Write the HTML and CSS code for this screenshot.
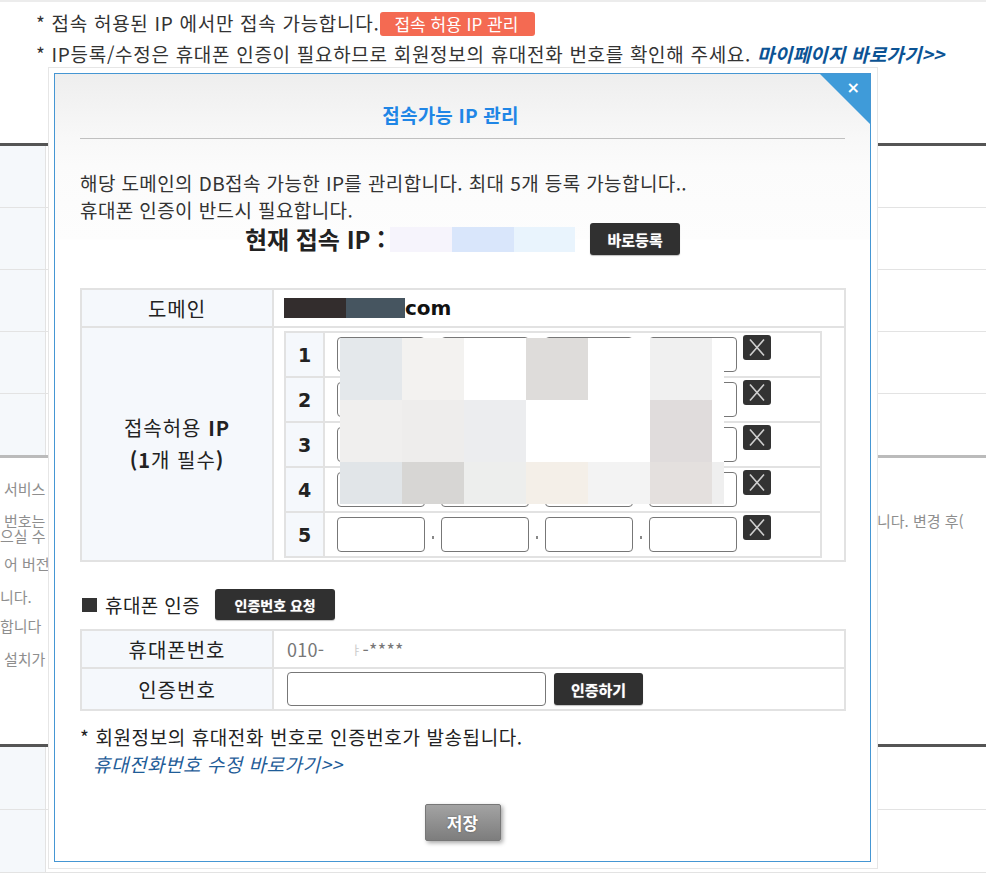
FILE: index.html
```html
<!DOCTYPE html>
<html lang="ko">
<head>
<meta charset="utf-8">
<title>접속가능 IP 관리</title>
<link rel="stylesheet" href="styles.css">
</head>
<body>
<div class="page">
  <div class="notices">
    <p class="notice">* 접속 허용된 IP 에서만 접속 가능합니다. <span class="btn-red">접속 허용 IP 관리</span></p>
    <p class="notice">* IP등록/수정은 휴대폰 인증이 필요하므로 회원정보의 휴대전화 번호를 확인해 주세요. <a class="mypage">마이페이지 바로가기&gt;&gt;</a></p>
  </div>
  <div class="bg-table bg-top">
    <div class="bg-row"><div class="bg-th"></div><div class="bg-td"></div></div>
    <div class="bg-row"><div class="bg-th"></div><div class="bg-td"></div></div>
    <div class="bg-row"><div class="bg-th"></div><div class="bg-td"></div></div>
    <div class="bg-row"><div class="bg-th"></div><div class="bg-td"></div></div>
    <div class="bg-row"><div class="bg-th"></div><div class="bg-td"></div></div>
  </div>
  <div class="bg-text">
    <div class="bgline l1"><span class="bg-left">서비스 이용 안내</span></div>
    <div class="bgline l2"><span class="bg-left">번호는 회원정보에 등록된 번호로 변경됩</span><span class="bg-right">니다. 변경 후(</span></div>
    <div class="bgline l3"><span class="bg-left">으실 수 있습니다</span></div>
    <div class="bgline l4"><span class="bg-left">어 버전</span></div>
    <div class="bgline l5"><span class="bg-left">니다.</span></div>
    <div class="bgline l6"><span class="bg-left">합니다</span></div>
    <div class="bgline l7"><span class="bg-left">설치가</span></div>
  </div>
  <div class="bg-table bg-bottom">
    <div class="bg-row"><div class="bg-th"></div><div class="bg-td"></div></div>
    <div class="bg-row"><div class="bg-th"></div><div class="bg-td"></div></div>
  </div>
</div>

<div class="modal-frame">
  <div class="modal">
    <a class="close">×</a>
    <h2 class="title">접속가능 IP 관리</h2>
    <hr class="rule">
    <p class="desc">해당 도메인의 DB접속 가능한 IP를 관리합니다. 최대 5개 등록 가능합니다..<br>휴대폰 인증이 반드시 필요합니다.</p>
    <div class="current-ip">
      <span class="current-label">현재 접속 IP :</span>
      <span class="ip-mask"><span class="m m1"></span><span class="m m2"></span><span class="m m3"></span></span>
      <button type="button" class="btn-dark btn-reg">바로등록</button>
    </div>

    <div class="info-table ip-table">
      <div class="th">도메인</div>
      <div class="td domain"><span class="dm dm1"></span><span class="dm dm2"></span><span class="com">com</span></div>
      <div class="th row2 allow"><span>접속허용 <b>IP</b><br><b>(1</b>개 필수<b>)</b></span></div>
      <div class="td row2 ipcell">
        <div class="iprows">
          <div class="iprow"><div class="num">1</div><div class="ipfields"><input class="oct" type="text"><span class="dot"></span><input class="oct" type="text"><span class="dot"></span><input class="oct" type="text"><span class="dot"></span><input class="oct" type="text"><button type="button" class="xbtn"><svg width="28" height="25" viewBox="0 0 28 25"><path d="M7 4.5 L21 20.5 M21 4.5 L7 20.5" stroke="#cfcfcf" stroke-width="1.6" fill="none"/></svg></button></div></div>
          <div class="iprow"><div class="num">2</div><div class="ipfields"><input class="oct" type="text"><span class="dot"></span><input class="oct" type="text"><span class="dot"></span><input class="oct" type="text"><span class="dot"></span><input class="oct" type="text"><button type="button" class="xbtn"><svg width="28" height="25" viewBox="0 0 28 25"><path d="M7 4.5 L21 20.5 M21 4.5 L7 20.5" stroke="#cfcfcf" stroke-width="1.6" fill="none"/></svg></button></div></div>
          <div class="iprow"><div class="num">3</div><div class="ipfields"><input class="oct" type="text"><span class="dot"></span><input class="oct" type="text"><span class="dot"></span><input class="oct" type="text"><span class="dot"></span><input class="oct" type="text"><button type="button" class="xbtn"><svg width="28" height="25" viewBox="0 0 28 25"><path d="M7 4.5 L21 20.5 M21 4.5 L7 20.5" stroke="#cfcfcf" stroke-width="1.6" fill="none"/></svg></button></div></div>
          <div class="iprow"><div class="num">4</div><div class="ipfields"><input class="oct" type="text"><span class="dot"></span><input class="oct" type="text"><span class="dot"></span><input class="oct" type="text"><span class="dot"></span><input class="oct" type="text"><button type="button" class="xbtn"><svg width="28" height="25" viewBox="0 0 28 25"><path d="M7 4.5 L21 20.5 M21 4.5 L7 20.5" stroke="#cfcfcf" stroke-width="1.6" fill="none"/></svg></button></div></div>
          <div class="iprow"><div class="num">5</div><div class="ipfields"><input class="oct" type="text"><span class="dot"></span><input class="oct" type="text"><span class="dot"></span><input class="oct" type="text"><span class="dot"></span><input class="oct" type="text"><button type="button" class="xbtn"><svg width="28" height="25" viewBox="0 0 28 25"><path d="M7 4.5 L21 20.5 M21 4.5 L7 20.5" stroke="#cfcfcf" stroke-width="1.6" fill="none"/></svg></button></div></div>
          <div class="blur">
            <i class="c-a"></i><i class="c-b"></i><i class="c-w"></i><i class="c-c"></i><i class="c-w"></i><i class="c-d"></i><i class="c-w"></i>
            <i class="c-e"></i><i class="c-f"></i><i class="c-g"></i><i class="c-w"></i><i class="c-w"></i><i class="c-h"></i><i class="c-w"></i>
            <i class="c-i"></i><i class="c-j"></i><i class="c-k"></i><i class="c-l"></i><i class="c-m"></i><i class="c-n"></i><i class="c-o"></i>
          </div>
        </div>
      </div>
    </div>

    <div class="auth-head">
      <span class="square"></span><span class="auth-title">휴대폰 인증</span>
      <button type="button" class="btn-dark btn-req">인증번호 요청</button>
    </div>

    <div class="info-table phone-table">
      <div class="th">휴대폰번호</div>
      <div class="td phone"><span>010-</span><span class="pmask">ㅑ</span><span>-****</span></div>
      <div class="th row2">인증번호</div>
      <div class="td row2 code"><input class="code-input" type="text"><button type="button" class="btn-dark btn-auth">인증하기</button></div>
    </div>

    <p class="note">* 회원정보의 휴대전화 번호로 인증번호가 발송됩니다.</p>
    <a class="edit-link">휴대전화번호 수정 바로가기&gt;&gt;</a>

    <div class="save-wrap"><button type="button" class="btn-save">저장</button></div>
  </div>
</div>
</body>
</html>
```
FILE: styles.css
```css
* { box-sizing: border-box; }
html, body { margin: 0; padding: 0; }
body {
  font-family: "Noto Sans CJK KR", "Noto Sans", sans-serif;
  color: #333;
  background: #fff;
  width: 986px;
  height: 881px;
  overflow: hidden;
  position: relative;
}

/* ---------- background page ---------- */
.page { border-top: 2px solid #ececec; padding-top: 5px; }
.notices { padding-left: 36px; }
.notice {
  margin: 0;
  font-size: 19px;
  letter-spacing: 0.7px;
  line-height: 31px;
  height: 31px;
  white-space: nowrap;
  color: #333;
}
.btn-red {
  display: inline-block;
  height: 24px;
  line-height: 24px;
  padding: 0 17px 0 14px;
  margin-left: -5px;
  background: #f46a52;
  color: #fff;
  font-size: 17px;
  letter-spacing: 0;
  border-radius: 3px;
  vertical-align: middle;
  position: relative;
  top: -2px;
}
.mypage { color: #0b5394; font-weight: bold; font-style: italic; letter-spacing: 0.2px; }

.bg-table { border-top: 3px solid #555; }
.bg-top { margin-top: 74px; border-bottom: 3px solid #bbb; }
.bg-row { display: flex; height: 62px; border-bottom: 1px solid #e3e3e3; }
.bg-top .bg-row:last-child { border-bottom: 0; height: 61px; }
.bg-bottom .bg-row { height: 63px; }
.bg-th { width: 46px; background: #f5f8fb; border-right: 1px solid #e3e3e3; }
.bg-td { flex: 1; }

.bg-text { height: 286px; padding-top: 23px; }
.bgline {
  display: flex;
  height: 16px;
  line-height: 16px;
  font-size: 15px;
  color: #8e8e8e;
  white-space: nowrap;
  overflow: hidden;
  padding-left: 4px;
}
.bg-left { width: 873px; flex-shrink: 0; overflow: hidden; }
.bg-right { flex-shrink: 0; }
.l2 { margin-top: 16px; }
.l3 { margin-top: -1px; padding-left: 0; }
.l4 { margin-top: 12px; }
.l5 { margin-top: 17px; padding-left: 0; }
.l6 { margin-top: 13px; padding-left: 0; }
.l7 { margin-top: 17px; }

/* ---------- modal ---------- */
.modal-frame {
  position: absolute;
  left: 48px;
  top: 67px;
  width: 830px;
  padding: 5px 6px 6px 5px;
  background: #fff;
  border: 1px solid #e6e6e6;
}
.modal {
  position: relative;
  border: 1px solid #4596d3;
  background: linear-gradient(to bottom, #eeeeee 0px, #f8f8f8 64px, #fbfbfb 92px, #fdfdfd 165px, #fff 166px);
  padding: 29px 25px 20px 25px;
}
.close {
  position: absolute;
  top: 0;
  right: 0;
  width: 50px;
  height: 50px;
  background: #3f9bd9;
  clip-path: polygon(0 0, 100% 0, 100% 100%);
  color: #fff;
  font-family: "DejaVu Sans", sans-serif;
  font-weight: bold;
  font-size: 16px;
  line-height: 20px;
  text-align: right;
  padding: 4px 10px 0 0;
}
.title {
  margin: 0;
  text-align: center;
  padding-right: 24px;
  font-size: 19px;
  letter-spacing: 0.2px;
  line-height: 24px;
  font-weight: bold;
  color: #1f86e6;
}
.rule { margin: 11px 0 0; border: 0; border-top: 1px solid #c0c0c0; height: 0; }
.desc { margin: 30px 0 0; font-size: 19px; letter-spacing: 0.4px; line-height: 27px; color: #333; }

.current-ip { display: flex; justify-content: center; align-items: center; height: 32px; }
.current-label { font-size: 24px; font-weight: bold; color: #222; margin-right: 5px; line-height: 32px; }
.ip-mask { display: flex; height: 25px; margin-right: 15px; }
.m { width: 62px; height: 25px; }
.m1 { background: #f6f4fc; }
.m2 { background: #d9e6fb; }
.m3 { background: #e9f4fd; width: 61px; }

.btn-dark {
  border: 0;
  margin: 0;
  padding: 0;
  background: #303030;
  color: #fff;
  font-family: "Noto Sans CJK KR", sans-serif;
  font-weight: bold;
  font-size: 15px;
  border-radius: 3px;
  text-shadow: 0 0 1px rgba(255,255,255,0.6);
  box-shadow: 0 1px 1px rgba(0,0,0,0.25);
}
.btn-reg { width: 90px; height: 32px; }

/* info tables */
.info-table {
  width: 766px;
  border: 2px solid #e2e2e2;
  display: grid;
  grid-template-columns: 192px 1fr;
}
.ip-table { margin-top: 33px; }
.info-table .th {
  background: #f5f8fc;
  border-right: 2px solid #e2e2e2;
  display: flex;
  align-items: center;
  justify-content: center;
  text-align: center;
  font-size: 20px;
  letter-spacing: 1px;
  color: #222;
}
.info-table .td { display: flex; align-items: center; }
.info-table .row2 { border-top: 2px solid #e2e2e2; }
.ip-table .th:first-child, .ip-table .domain { height: 36px; }
.allow { line-height: 32px; }
.allow b { font-weight: bold; }

.domain { padding-left: 10px; }
.dm { height: 20px; display: inline-block; }
.dm1 { width: 62px; background: #332d2d; }
.dm2 { width: 59px; background: #465560; }
.com { font-family: "DejaVu Sans", sans-serif; font-weight: bold; font-size: 20px; color: #111; line-height: 24px; }

.ipcell { padding: 3px 22px 2px 10px; align-items: flex-start; }
.iprows { position: relative; width: 538px; border: 2px solid #e2e2e2; }
.iprow { display: flex; height: 45px; border-top: 2px solid #e2e2e2; }
.iprow:first-child { height: 43px; border-top: 0; }
.num {
  width: 39px;
  background: #f5f8fc;
  border-right: 2px solid #e2e2e2;
  display: flex;
  align-items: center;
  justify-content: center;
  font-family: "DejaVu Sans", sans-serif;
  font-weight: bold;
  font-size: 19px;
  color: #222;
}
.ipfields { display: flex; align-items: flex-start; padding: 4px 0 0 12px; }
.oct {
  width: 88px;
  height: 35px;
  margin: 0;
  border: 1px solid #777;
  border-radius: 4px;
  background: #fff;
}
.dot { width: 16px; height: 35px; position: relative; }
.dot::after {
  content: "";
  position: absolute;
  left: 7px;
  top: 19px;
  width: 2px;
  height: 3px;
  background: #888;
}
.xbtn {
  width: 28px;
  height: 25px;
  margin: -2px 0 0 6px;
  padding: 0;
  border: 0;
  background: #333;
  border-radius: 3px;
  display: flex;
}

.blur {
  position: absolute;
  left: 54px;
  top: 5px;
  display: grid;
  grid-template-columns: repeat(6, 62px) 12px;
  grid-template-rows: 62px 62px 42px;
}
.blur i { display: block; }
.c-w { background: #fff; }
.c-a { background: #e4e8eb; }
.c-b { background: #f3f2f0; }
.c-c { background: #dedcda; }
.c-d { background: #f0f0f0; }
.c-e { background: #f0efee; }
.c-f { background: #eeedec; }
.c-g { background: #ecedef; }
.c-h { background: #e0dcdc; }
.c-i { background: #e1e5e8; }
.c-j { background: #d7d6d4; }
.c-k { background: #edeeed; }
.c-l { background: #f4efe8; }
.c-m { background: #f3f3f3; }
.c-n { background: #e4e0de; }
.c-o { background: #efefef; }

/* phone auth */
.auth-head { margin-top: 27px; display: flex; align-items: center; height: 31px; }
.square { width: 15px; height: 14px; background: #333; margin: 0 8px 0 2px; }
.auth-title { font-size: 19px; letter-spacing: 0.4px; color: #222; }
.btn-req { width: 120px; height: 31px; margin-left: 15px; font-size: 14px; }

.phone-table { margin-top: 9px; }
.phone-table .th:first-child, .phone { height: 36px; }
.phone-table .code { height: 42px; }
.phone { padding-left: 13px; font-size: 18px; letter-spacing: 0.3px; color: #777; }
.pmask { width: 38px; text-align: right; color: #ccc; font-size: 12px; }
.code { padding-left: 13px; gap: 8px; }
.code-input {
  width: 259px;
  height: 34px;
  margin: 0;
  border: 1px solid #777;
  border-radius: 4px;
}
.btn-auth { width: 89px; height: 32px; }

.note { margin: 12px 0 0; font-size: 19px; letter-spacing: 0.6px; line-height: 27px; color: #222; }
.edit-link {
  display: block;
  margin-left: 13px;
  font-size: 19px;
  letter-spacing: 0.5px;
  line-height: 27px;
  font-style: italic;
  color: #1f5d98;
}

.save-wrap { margin-top: 27px; display: flex; justify-content: center; }
.btn-save {
  width: 76px;
  height: 37px;
  margin: 0;
  padding: 0;
  border: 1px solid #777;
  border-radius: 2px;
  background: linear-gradient(to bottom, #a3a3a3, #7d7d7d);
  color: #fff;
  font-family: "Noto Sans CJK KR", sans-serif;
  font-weight: bold;
  font-size: 17px;
  text-shadow: 0 0 2px rgba(0,0,0,0.4);
  box-shadow: 2px 2px 4px rgba(0,0,0,0.35);
}
```
